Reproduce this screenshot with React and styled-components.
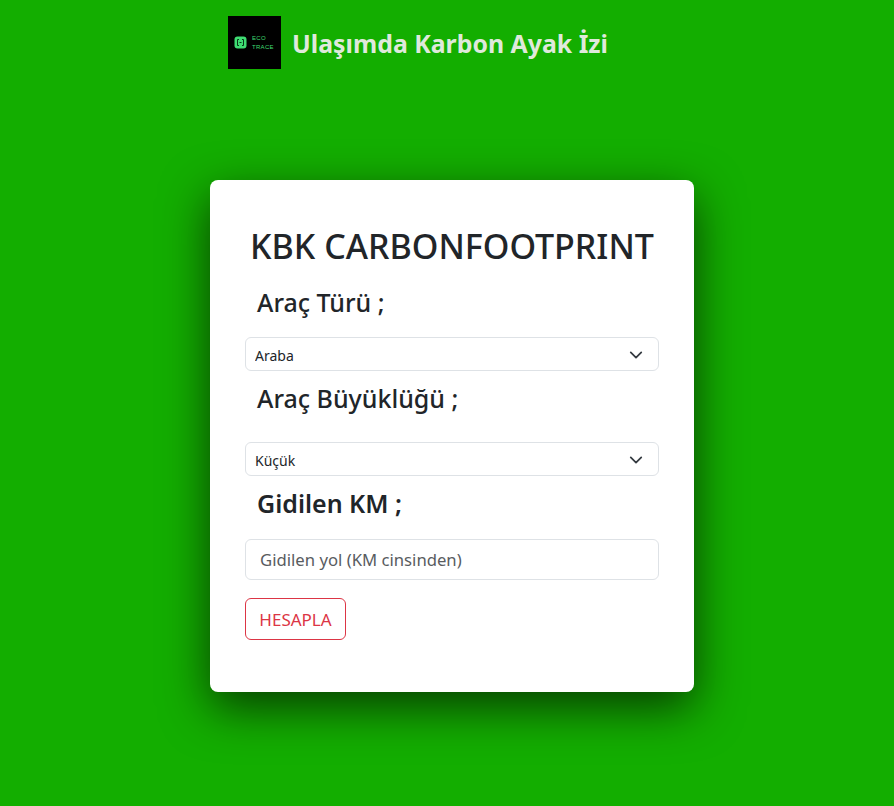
import React from "react";
import styled, { createGlobalStyle } from "styled-components";

const GlobalStyle = createGlobalStyle`
  html, body {
    margin: 0;
    padding: 0;
    background-color: #13ae00;
    font-family: "Noto Sans", "Open Sans", sans-serif;
    color: #212529;
  }
  * { box-sizing: border-box; }
`;

const Page = styled.div`
  width: 100%;
  height: 806px;
  overflow: hidden;
  background-color: #13ae00;
`;

const Header = styled.header`
  display: flex;
  align-items: flex-start;
  gap: 11px;
  padding: 16px 0 0 228px;
  height: 180px;
`;

const Logo = styled.div`
  width: 53px;
  height: 53px;
  background-color: #000;
  display: flex;
  align-items: center;
  gap: 5px;
  padding-left: 6px;
  flex-shrink: 0;
`;

const LogoText = styled.div`
  font-family: "Liberation Sans", sans-serif;
  font-size: 6px;
  line-height: 9px;
  letter-spacing: 0.3px;
  color: #3fdc72;
`;

const Title = styled.h1`
  margin: 0;
  font-size: 24.85px;
  line-height: 55px;
  font-weight: 700;
  color: #dfe9db;
`;

const Card = styled.main`
  width: 484px;
  height: 512px;
  margin-left: 210px;
  padding: 43px 35px 0;
  background-color: #fff;
  border-radius: 8px;
  box-shadow: 0 16px 48px rgba(0, 0, 0, 0.65);
`;

const Heading = styled.h2`
  margin: 0 0 19px;
  font-size: 34px;
  line-height: 46px;
  font-weight: 500;
  text-align: center;
`;

const Label = styled.label`
  display: block;
  padding-left: 12px;
  font-size: 25px;
  line-height: 29px;
  font-weight: ${(p) => (p.$strong ? 600 : 500)};
  margin-bottom: ${(p) => p.$gap}px;
`;

const SelectWrap = styled.div`
  position: relative;
  height: 34px;
  margin-bottom: ${(p) => p.$after}px;
`;

const Select = styled.select`
  display: block;
  width: 100%;
  height: 100%;
  padding: 2px 36px 0 9px;
  appearance: none;
  background: #fff;
  border: 1px solid #dee2e6;
  border-radius: 6px;
  font-family: inherit;
  font-size: 14px;
  color: #212529;
`;

const Chevron = styled.svg`
  position: absolute;
  right: 16px;
  top: 11px;
  width: 14px;
  height: 14px;
  pointer-events: none;
`;

const Input = styled.input`
  display: block;
  width: 100%;
  height: 41px;
  padding: 0 14px;
  border: 1px solid #dee2e6;
  border-radius: 6px;
  font-family: inherit;
  font-size: 16.7px;
  color: #212529;
  &::placeholder {
    color: #595c5f;
    opacity: 1;
  }
`;

const Button = styled.button`
  display: block;
  margin-top: 18px;
  width: 101px;
  height: 42px;
  padding: 0;
  background: transparent;
  border: 1px solid #dc3545;
  border-radius: 6px;
  font-family: inherit;
  font-size: 17px;
  color: #dc3545;
`;

const Arrow = () => (
  <Chevron viewBox="0 0 16 16">
    <path
      d="m2 5 6 6 6-6"
      fill="none"
      stroke="#343a40"
      strokeWidth="2"
      strokeLinecap="round"
      strokeLinejoin="round"
    />
  </Chevron>
);

const App = () => {
  return (
    <Page>
      <GlobalStyle />
      <Header>
        <Logo>
          <svg width="13" height="13" viewBox="0 0 13 13">
            <rect x="0.5" y="0.5" width="12" height="12" rx="3" fill="#3fdc72" />
            <path d="M5 3.5H3.5v6H5M8 3.5h1.5v6H8M5.5 6.5h2" fill="none" stroke="#07351a" strokeWidth="1" />
          </svg>
          <LogoText>
            ECO
            <br />
            TRACE
          </LogoText>
        </Logo>
        <Title>Ulaşımda Karbon Ayak İzi</Title>
      </Header>
      <Card>
        <Heading>KBK CARBONFOOTPRINT</Heading>
        <Label $gap={20}>Araç Türü ;</Label>
        <SelectWrap $after={13}>
          <Select defaultValue="Araba">
            <option>Araba</option>
            <option>Motosiklet</option>
          </Select>
          <Arrow />
        </SelectWrap>
        <Label $gap={29}>Araç Büyüklüğü ;</Label>
        <SelectWrap $after={13}>
          <Select defaultValue="Küçük">
            <option>Küçük</option>
            <option>Orta</option>
            <option>Büyük</option>
          </Select>
          <Arrow />
        </SelectWrap>
        <Label $gap={21} $strong>Gidilen KM ;</Label>
        <Input placeholder="Gidilen yol (KM cinsinden)" />
        <Button>HESAPLA</Button>
      </Card>
    </Page>
  );
};

export default App;
